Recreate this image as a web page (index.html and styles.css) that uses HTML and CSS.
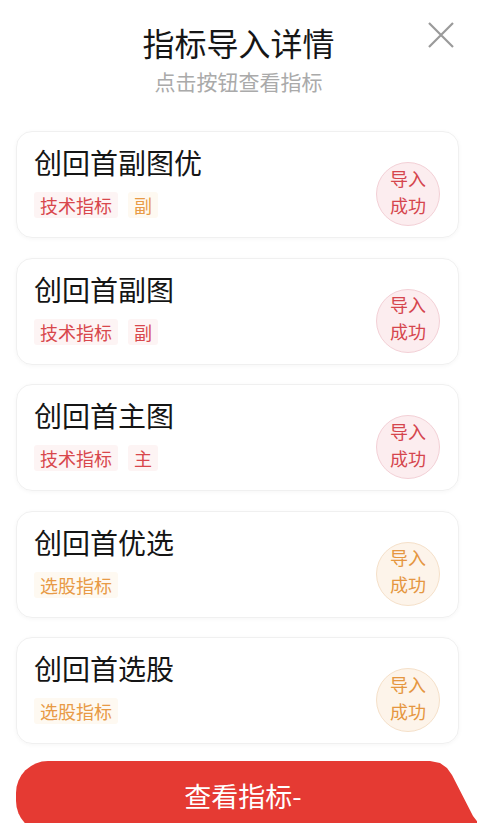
FILE: index.html
```html
<!DOCTYPE html>
<html lang="zh">
<head>
<meta charset="utf-8">
<link rel="stylesheet" href="styles.css">
</head>
<body>
<div class="sheet">
  <header class="head">
    <h1 class="title">指标导入详情</h1>
    <p class="sub">点击按钮查看指标</p>
    <svg class="close" viewBox="0 0 26 26" width="26" height="26"><path d="M1 1L25 25M25 1L1 25" stroke="#9a9a9a" stroke-width="2.2" fill="none"/></svg>
  </header>
  <div class="list">
    <div class="card">
      <div class="info">
        <div class="name">创回首副图优</div>
        <div class="tags"><span class="tag red">技术指标</span><span class="tag orange">副</span></div>
      </div>
      <div class="badge red"><span>导入</span><span>成功</span></div>
    </div>
    <div class="card">
      <div class="info">
        <div class="name">创回首副图</div>
        <div class="tags"><span class="tag red">技术指标</span><span class="tag red">副</span></div>
      </div>
      <div class="badge red"><span>导入</span><span>成功</span></div>
    </div>
    <div class="card">
      <div class="info">
        <div class="name">创回首主图</div>
        <div class="tags"><span class="tag red">技术指标</span><span class="tag red">主</span></div>
      </div>
      <div class="badge red"><span>导入</span><span>成功</span></div>
    </div>
    <div class="card">
      <div class="info">
        <div class="name">创回首优选</div>
        <div class="tags"><span class="tag orange">选股指标</span></div>
      </div>
      <div class="badge orange"><span>导入</span><span>成功</span></div>
    </div>
    <div class="card">
      <div class="info">
        <div class="name">创回首选股</div>
        <div class="tags"><span class="tag orange">选股指标</span></div>
      </div>
      <div class="badge orange"><span>导入</span><span>成功</span></div>
    </div>
  </div>
  <div class="btn">查看指标-</div>
</div>
</body>
</html>
```
FILE: styles.css
```css
* { box-sizing: border-box; margin: 0; padding: 0; }
html, body { width: 477px; height: 823px; overflow: hidden; background: #fff; }
body { font-family: "Noto Sans CJK SC", "Noto Sans", sans-serif; color: #111; }
.sheet { display: flex; flex-direction: column; }
.head { position: relative; display: flex; flex-direction: column; align-items: center; padding-top: 23px; }
.title { font-size: 32px; font-weight: 400; line-height: 38px; color: #161616; }
.sub { font-size: 21px; line-height: 28px; color: #aaaaaa; margin-top: 6px; }
.close { position: absolute; left: 428px; top: 22px; }
.list { display: flex; flex-direction: column; gap: 19.5px; margin: 36px 18px 0 16px; }
.card { height: 107px; border: 1px solid #f0f0f0; border-radius: 16px; box-shadow: 0 1px 4px rgba(0,0,0,0.04); display: flex; justify-content: space-between; align-items: flex-start; padding: 12px 18px 0 17px; }
.name { font-size: 28px; line-height: 36px; color: #151515; }
.tags { display: flex; gap: 10px; margin-top: 12px; }
.tag { font-size: 18px; line-height: 26px; padding: 0 6px; border-radius: 3px; }
.tag.red { color: #d8474c; background: #fdf4f4; }
.tag.orange { color: #e89a45; background: #fef9f1; }
.badge { width: 64px; height: 64px; border-radius: 50%; margin-top: 18px; display: flex; flex-direction: column; align-items: center; justify-content: center; font-size: 18px; line-height: 27px; padding-bottom: 5px; }
.badge.red { background: #fcedef; border: 1px solid #f3d0d6; color: #d5454d; }
.badge.orange { background: #fdf4ea; border: 1px solid #f5e0c9; color: #e59640; }
.btn { margin: 17px 0 0 16px; width: 470px; height: 72px; background: #e53a33; color: #fff; font-size: 27px; line-height: 70px; text-align: center; padding-right: 16px; border-radius: 32px 0 0 32px; clip-path: polygon(0 0, 414px 0, 424px 2px, 431px 7px, 436px 14px, 457px 55px, 470px 72px, 0 72px); }
```
